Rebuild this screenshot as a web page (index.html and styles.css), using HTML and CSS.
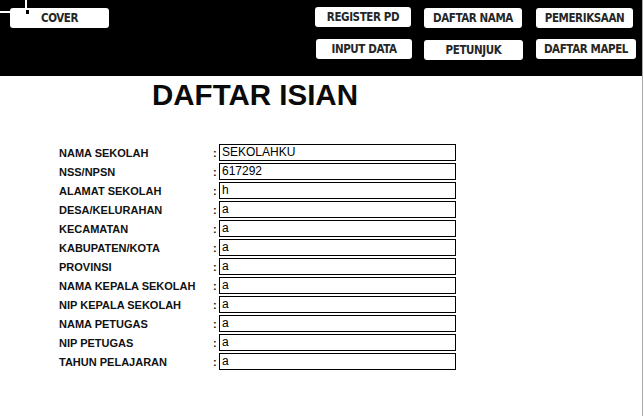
FILE: index.html
```html
<!DOCTYPE html>
<html lang="id">
<head>
<meta charset="utf-8">
<title>Daftar Isian</title>
<link rel="stylesheet" href="styles.css">
</head>
<body>
<div class="page">
  <header class="topbar">
    <span class="mark-h"></span>
    <span class="mark-v"></span>
    <span class="mark-sq"></span>
    <a class="btn btn-cover">COVER</a>
    <nav class="menu">
      <a class="btn w1">REGISTER PD</a>
      <a class="btn w2">DAFTAR NAMA</a>
      <a class="btn w3">PEMERIKSAAN</a>
      <a class="btn w1 shift">INPUT DATA</a>
      <a class="btn w2b">PETUNJUK</a>
      <a class="btn w3b">DAFTAR MAPEL</a>
    </nav>
  </header>
  <main class="content">
    <h1 class="title">DAFTAR ISIAN</h1>
    <div class="form">
      <div class="label">NAMA SEKOLAH</div><div class="colon">:</div><div class="field">SEKOLAHKU</div>
      <div class="label">NSS/NPSN</div><div class="colon">:</div><div class="field">617292</div>
      <div class="label">ALAMAT SEKOLAH</div><div class="colon">:</div><div class="field">h</div>
      <div class="label">DESA/KELURAHAN</div><div class="colon">:</div><div class="field">a</div>
      <div class="label">KECAMATAN</div><div class="colon">:</div><div class="field">a</div>
      <div class="label">KABUPATEN/KOTA</div><div class="colon">:</div><div class="field">a</div>
      <div class="label">PROVINSI</div><div class="colon">:</div><div class="field">a</div>
      <div class="label">NAMA KEPALA SEKOLAH</div><div class="colon">:</div><div class="field">a</div>
      <div class="label">NIP KEPALA SEKOLAH</div><div class="colon">:</div><div class="field">a</div>
      <div class="label">NAMA PETUGAS</div><div class="colon">:</div><div class="field">a</div>
      <div class="label">NIP PETUGAS</div><div class="colon">:</div><div class="field">a</div>
      <div class="label">TAHUN PELAJARAN</div><div class="colon">:</div><div class="field">a</div>
    </div>
  </main>
</div>
</body>
</html>
```

FILE: styles.css
```css
html, body {
  margin: 0;
  padding: 0;
  background: #fff;
}

.page {
  width: 642px;
  height: 416px;
  border-right: 1px solid #a9a9a9;
  font-family: "Liberation Sans", Arial, sans-serif;
  color: #000;
  overflow: hidden;
}

.topbar {
  position: relative;
  height: 76px;
  background: #000;
  display: flex;
  align-items: flex-start;
  padding: 0 5px 0 10px;
  box-sizing: border-box;
}

.mark-h {
  position: absolute;
  left: 0;
  top: 11px;
  width: 27px;
  height: 2px;
  background: #fff;
}

.mark-v {
  position: absolute;
  left: 25px;
  top: 0;
  width: 2px;
  height: 12px;
  background: #fff;
}

.mark-sq {
  position: absolute;
  left: 26px;
  top: 10px;
  width: 3px;
  height: 4px;
  background: #000;
}

.btn {
  display: flex;
  align-items: center;
  justify-content: center;
  height: 20px;
  background: #fff;
  border-radius: 3px;
  font-family: "DejaVu Sans Condensed", "DejaVu Sans", sans-serif;
  font-stretch: condensed;
  font-weight: bold;
  font-size: 11.5px;
  letter-spacing: -0.4px;
  color: #262626;
  box-sizing: border-box;
  white-space: nowrap;
}

.btn-cover {
  width: 99px;
  margin-top: 8px;
}

.menu {
  margin-left: auto;
  display: grid;
  grid-template-columns: 109px 112px 101px;
  grid-auto-rows: 20px;
  row-gap: 12px;
  padding-top: 7px;
}

.w1 { width: 96px; }
.w2 { width: 98px; margin-top: 1px; }
.w3 { width: 97px; margin-top: 1px; }
.w2b { width: 99px; margin-top: 1px; }
.w3b { width: 100px; }
.shift { margin-left: 1px; }

.content {
  padding-top: 4px;
}

.title {
  margin: 0 0 0 152px;
  font-size: 29.5px;
  line-height: 29px;
  font-weight: bold;
  color: #0a0a0a;
}

.form {
  margin-top: 35px;
  margin-left: 59px;
  display: grid;
  grid-template-columns: 154px 6px 237px;
  grid-auto-rows: 17px;
  row-gap: 2px;
  align-items: center;
}

.label {
  font-size: 11px;
  font-weight: bold;
  color: #111;
  white-space: nowrap;
}

.colon {
  font-size: 11px;
  font-weight: bold;
  color: #111;
}

.field {
  height: 17px;
  box-sizing: border-box;
  border: 1px solid #000;
  padding: 0 2px;
  font-size: 12px;
  line-height: 15px;
  color: #000;
}
```
